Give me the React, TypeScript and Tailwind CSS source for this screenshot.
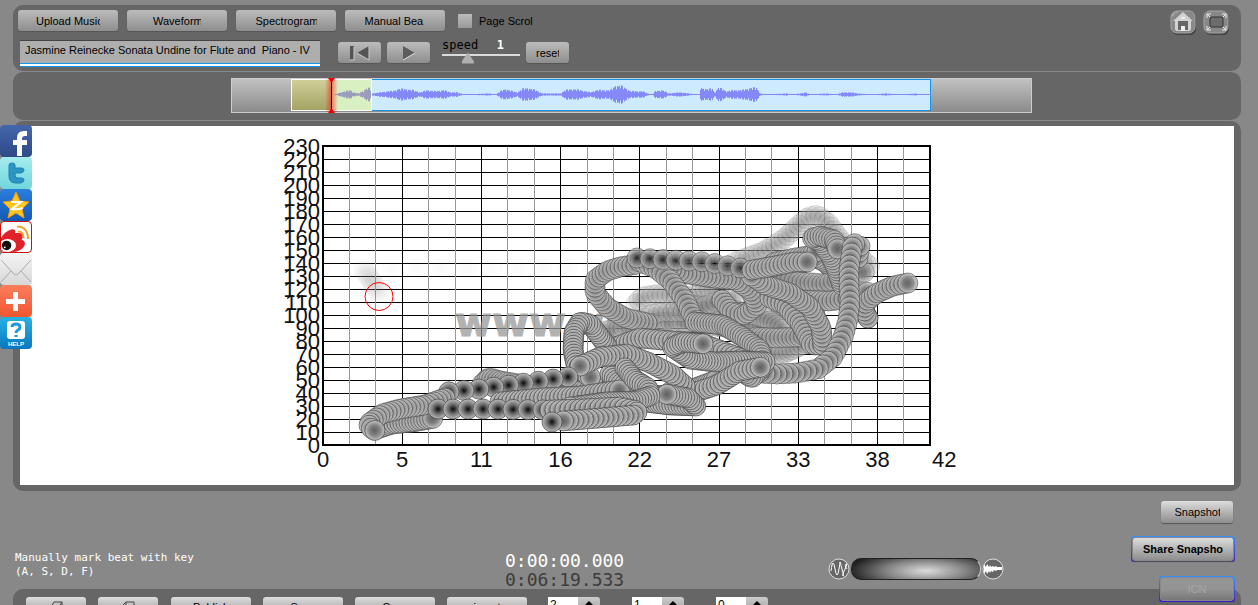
import React from "react";

type Point = [number, number];

type Strand = {
  points: Point[];
  step: number;
  opacity: number;
};

// oldest strand first, newest last
const strands: Strand[] = [
  { points: [[364, 270], [369, 277], [375, 286], [379, 293]], step: 3, opacity: 0.05 },
  { points: [[392, 270], [425, 268], [520, 268], [620, 268]], step: 25, opacity: 0.02 },
  { points: [[735, 262], [765, 251], [785, 238], [798, 226], [808, 217], [818, 215], [828, 223], [843, 243], [860, 258], [872, 268]], step: 5, opacity: 0.25 },
  { points: [[636, 304], [642, 297], [660, 294], [690, 297], [708, 288], [722, 296]], step: 5, opacity: 0.25 },
  { points: [[600, 332], [630, 326], [665, 322], [700, 325], [740, 328], [775, 320]], step: 4, opacity: 0.3 },
  { points: [[680, 305], [705, 306], [735, 310], [765, 318], [785, 330]], step: 4, opacity: 0.35 },
  { points: [[765, 355], [785, 353], [800, 346], [815, 340]], step: 4, opacity: 0.35 },
  { points: [[640, 320], [660, 312], [690, 312], [720, 300], [740, 296]], step: 5, opacity: 0.3 },
  { points: [[756, 337], [775, 338], [800, 337], [815, 330]], step: 4, opacity: 0.7 },
  { points: [[868, 318], [860, 305], [848, 290], [835, 272], [825, 262], [812, 256], [800, 265], [785, 270]], step: 3, opacity: 0.8 },
  { points: [[775, 276], [800, 282], [825, 284], [850, 275], [865, 272]], step: 4, opacity: 0.6 },
  { points: [[770, 290], [800, 300], [830, 301], [850, 298], [868, 292]], step: 4, opacity: 0.8 },
  { points: [[762, 272], [775, 262], [795, 258], [808, 256], [820, 250]], step: 4, opacity: 0.8 },
  { points: [[868, 318], [864, 310], [866, 302], [877, 293], [893, 286], [908, 283]], step: 4, opacity: 0.85 },
  { points: [[722, 300], [732, 312], [745, 315], [757, 305], [750, 290], [735, 280], [712, 278], [682, 273], [660, 265]], step: 4, opacity: 0.85 },
  { points: [[770, 298], [785, 305], [800, 323], [812, 345], [823, 345], [821, 327], [810, 307], [790, 293], [765, 285], [750, 275]], step: 4, opacity: 0.9 },
  { points: [[647, 323], [625, 318], [607, 307], [595, 293], [595, 280], [607, 271], [620, 267], [638, 264]], step: 4, opacity: 0.8 },
  { points: [[640, 262], [655, 268], [670, 280], [685, 300], [693, 317], [700, 322]], step: 5, opacity: 0.8 },
  { points: [[842, 285], [836, 268], [830, 255], [820, 242], [812, 238], [820, 236], [834, 240], [838, 250]], step: 3, opacity: 0.9 },
  { points: [[637, 258], [706, 262], [752, 270]], step: 13, opacity: 0.8 },
  { points: [[752, 270], [775, 266], [795, 262], [808, 262]], step: 4, opacity: 0.9 },
  { points: [[858, 258], [860, 246], [853, 243], [851, 255], [849, 270], [849, 287], [850, 303], [848, 320], [843, 337], [833, 357], [818, 369], [797, 373], [777, 374], [757, 373]], step: 6, opacity: 0.9 },
  { points: [[695, 322], [723, 325], [743, 337], [760, 350], [764, 366], [752, 378], [742, 372]], step: 3, opacity: 0.9 },
  { points: [[607, 350], [640, 338], [673, 341], [700, 343], [717, 349], [740, 358], [760, 366]], step: 4, opacity: 1 },
  { points: [[487, 379], [500, 384], [530, 392], [560, 393], [590, 390], [620, 382]], step: 4, opacity: 0.8 },
  { points: [[607, 346], [598, 334], [590, 324], [580, 322], [574, 332], [573, 350], [576, 365], [588, 376], [592, 378]], step: 3, opacity: 1 },
  { points: [[610, 374], [618, 382], [640, 392], [660, 396], [690, 390], [717, 380]], step: 3, opacity: 1 },
  { points: [[765, 362], [740, 361], [715, 362], [690, 359], [672, 347], [684, 342], [706, 344]], step: 3, opacity: 1 },
  { points: [[670, 392], [693, 393], [717, 385], [740, 371], [762, 367]], step: 4, opacity: 1 },
  { points: [[685, 386], [673, 375], [650, 363], [627, 354], [600, 357], [578, 367]], step: 4, opacity: 1 },
  { points: [[645, 402], [670, 405], [696, 406], [688, 398], [665, 394]], step: 3, opacity: 1 },
  { points: [[374, 430], [392, 424], [412, 422], [435, 418]], step: 3, opacity: 0.9 },
  { points: [[482, 384], [490, 378], [500, 381], [530, 386], [565, 384]], step: 3, opacity: 0.7 },
  { points: [[568, 377], [540, 381], [510, 385], [480, 389], [447, 392]], step: 15, opacity: 1 },
  { points: [[445, 398], [425, 405], [400, 409], [382, 414], [368, 424], [372, 429], [376, 431]], step: 4, opacity: 0.9 },
  { points: [[500, 402], [540, 398], [580, 396], [620, 390]], step: 4, opacity: 1 },
  { points: [[625, 368], [635, 380], [648, 388], [650, 396], [635, 401], [605, 402], [570, 407]], step: 3, opacity: 1 },
  { points: [[438, 409], [490, 409], [550, 410]], step: 15, opacity: 1 },
  { points: [[550, 410], [580, 409], [620, 407], [638, 411], [634, 415], [600, 418], [562, 421]], step: 5, opacity: 1 },
  { points: [[552, 422]], step: 20, opacity: 1 },
];

// walk along the poly line and drop a dot every step pixels
function dots({ points, step }: Strand): Point[] {
  const out: Point[] = [points[0]];
  let left = step;
  for (let i = 1; i < points.length; i++) {
    const [x1, y1] = points[i - 1];
    const [x2, y2] = points[i];
    const length = Math.hypot(x2 - x1, y2 - y1);
    let at = left;
    while (at <= length) {
      out.push([x1 + ((x2 - x1) * at) / length, y1 + ((y2 - y1) * at) / length]);
      at += step;
    }
    left = at - length;
  }
  return out;
}

const xLabels = ["0", "5", "11", "16", "22", "27", "33", "38"];

const Chart = () => {
  return (
    <svg
      viewBox="277 126 700 359"
      width={700}
      height={359}
      className="font-['Liberation_Sans',sans-serif] text-[22px]"
    >
      <defs>
        <radialGradient id="dot">
          <stop offset="0" stopColor="#080808" />
          <stop offset="0.45" stopColor="#686868" />
          <stop offset="1" stopColor="#bdbdbd" />
        </radialGradient>
        <radialGradient id="dense">
          <stop offset="0" stopColor="#606060" />
          <stop offset="0.5" stopColor="#808080" />
          <stop offset="1" stopColor="#c8c8c8" />
        </radialGradient>
      </defs>
      {Array.from({ length: 24 }, (_, i) => (
        <g key={i}>
          <line x1={323} x2={930} y1={445.5 - i * 13} y2={445.5 - i * 13} stroke="#000" />
          <text x={320} y={453 - i * 13} textAnchor="end" fill="#111">
            {i * 10}
          </text>
        </g>
      ))}
      {Array.from({ length: 23 }, (_, i) => {
        const x = Math.floor(323 + i * 26.4) + 0.5;
        return (
          <line key={i} x1={x} x2={x} y1={146} y2={445} stroke={i % 3 ? "#999" : "#000"} />
        );
      })}
      <rect x={323} y={146} width={607} height={299} fill="none" stroke="#000" strokeWidth={2} />
      {xLabels.map((label, i) => (
        <text key={label} x={323 + i * 79.2} y={467} textAnchor="middle" fill="#111">
          {label}
        </text>
      ))}
      <text x={932} y={467} fill="#111">
        42
      </text>
      <text
        x={455}
        y={336}
        fill="#999"
        stroke="#999"
        opacity={0.75}
        className="font-['DejaVu_Sans',sans-serif] text-[40px] font-bold"
      >
        www.vmus.net
      </text>
      {strands.map((strand, i) => (
        <g key={i}>
          {dots(strand).map(([x, y], j) => (
            <circle
              key={j}
              cx={x}
              cy={y}
              r={10}
              fill={strand.step > 10 ? "url(#dot)" : "url(#dense)"}
              stroke="#444"
              strokeWidth={0.7}
              opacity={strand.opacity}
            />
          ))}
        </g>
      ))}
      <circle cx={379} cy={296.5} r={14} fill="none" stroke="#f00" />
    </svg>
  );
};

// x and half height of the wave's outline
const envelope: Point[] = [
  [335, 0], [340, 2], [345, 3], [350, 4], [353, 2], [358, 1], [362, 3], [367, 6], [371, 5], [372, 1],
  [380, 2], [388, 3], [392, 3], [398, 5], [405, 5], [412, 4], [420, 2], [427, 4], [435, 3], [443, 4],
  [450, 2], [456, 2], [460, 1], [465, 0], [488, 1], [495, 0], [500, 3], [505, 5], [512, 3], [517, 2],
  [522, 5], [527, 6], [535, 4], [542, 1], [560, 1], [565, 4], [572, 5], [580, 4], [590, 2], [596, 4],
  [610, 4], [615, 8], [620, 8], [625, 6], [630, 3], [642, 3], [647, 1], [652, 0], [655, 3], [662, 4],
  [668, 1], [680, 2], [688, 1], [695, 0], [699, 0], [700, 6], [706, 5], [712, 5], [714, 2], [718, 6],
  [722, 5], [726, 3], [735, 4], [742, 4], [750, 6], [756, 6], [760, 1], [765, 0], [786, 1], [792, 0],
  [800, 1], [805, 2], [810, 0], [826, 1], [835, 0], [843, 2], [850, 2], [858, 1], [870, 0], [885, 1],
  [900, 0], [915, 1], [920, 0], [931, 0],
];

function wavePath(from: number, to: number) {
  let d = "";
  for (let i = 1; i < envelope.length; i++) {
    const [x1, a1] = envelope[i - 1];
    const [x2, a2] = envelope[i];
    for (let x = Math.max(x1, from); x < Math.min(x2, to); x++) {
      const amp = a1 + ((a2 - a1) * (x - x1)) / (x2 - x1);
      const half = Math.max(0.5, amp * (0.65 + ((x * x * 7) % 11) / 18));
      d += `M${x + 0.5} ${94.5 - half}V${94.5 + half}`;
    }
  }
  return d;
}

const Overview = () => {
  return (
    <svg viewBox="231 78 801 35" width={801} height={35}>
      <defs>
        <linearGradient id="strip" x2="0" y2="1">
          <stop offset="0" stopColor="#c2c2c2" />
          <stop offset="1" stopColor="#8a8a8a" />
        </linearGradient>
        <linearGradient id="olive" x2="0" y2="1">
          <stop offset="0" stopColor="#d0d09a" />
          <stop offset="1" stopColor="#a3a364" />
        </linearGradient>
        <linearGradient id="glow">
          <stop offset="0" stopColor="#f00" stopOpacity="0" />
          <stop offset="0.5" stopColor="#f00" stopOpacity="0.5" />
          <stop offset="1" stopColor="#f00" stopOpacity="0" />
        </linearGradient>
      </defs>
      <rect x={231.5} y={78.5} width={800} height={34} fill="url(#strip)" stroke="#ccc" />
      <rect x={331.5} y={79.5} width={599} height={31} fill="#cdeafe" stroke="#1794ee" />
      <rect x={291.5} y={79.5} width={40} height={31} fill="url(#olive)" />
      <rect x={331.5} y={79.5} width={40} height={31} fill="#d9f0c2" />
      <path d={wavePath(335, 371)} stroke="#9a9ebc" />
      <path d={wavePath(371, 931)} stroke="#8488f8" />
      <rect x={291.5} y={79.5} width={80} height={31} fill="none" stroke="#fff" />
      <rect x={325} y={79} width={13} height={33} fill="url(#glow)" />
      <line x1={331.5} x2={331.5} y1={79} y2={112} stroke="#600" />
      <path d="M328 78h7l-3 4h-1zM328 113h7l-3-4h-1z" fill="#e00" />
    </svg>
  );
};

const button =
  "flex items-center justify-center rounded-[3px] bg-linear-to-b from-[#bcbcbc] to-[#8e8e8e] text-[11px] text-black shadow-[0_1px_1px_#555]";
const clipped = "block h-3 overflow-hidden whitespace-nowrap text-left leading-3";

const tabs = [
  { label: "Upload Music", look: "w-16" },
  { label: "Waveform", look: "w-12" },
  { label: "Spectrogram", look: "w-[61px]" },
  { label: "Manual Bea", look: "w-[61px]" },
];

const Toolbar = () => {
  return (
    <header className="rounded-[10px] bg-[#666] pt-[5px] pr-3 pb-1 pl-[5px]">
      <div className="flex h-[30px] items-start">
        <div className="flex items-center gap-[9px]">
          {tabs.map((tab, i) => (
            <button
              key={tab.label}
              className={`${button} h-[21px] w-[100px] ${i % 2 ? "from-[#9c9c9c]" : ""}`}
            >
              <span className={`${clipped} ${tab.look}`}>{tab.label}</span>
            </button>
          ))}
        </div>
        <div className="ml-[13px] flex h-[21px] items-center gap-[7px]">
          <input
            id="scroll"
            type="checkbox"
            className="size-[14px] appearance-none bg-linear-to-b from-[#bbb] to-[#999]"
          />
          <label htmlFor="scroll" className={`${clipped} text-[11px]`}>
            Page Scrol
          </label>
        </div>
        <div className="ml-auto flex gap-[6px]">
          <button aria-label="Home">
            <svg width={27} height={25} viewBox="0 0 27 25">
              <rect x={3} y={2} width={24} height={23} rx={6} fill="#3e4440" />
              <rect x={2} y={1} width={24} height={22} rx={6} fill="#888" stroke="#a5a5a5" />
              <path d="M3 7Q4 2 10 2L6 3z" fill="#ddd" />
              <path d="M14 2L4 11h2v8q0 2 2 2h12q2 0 2-2v-8h2z" fill="#d2d2d2" />
              <path d="M9 11h10v9h-3v-4h-4v4H9z" fill="#666" />
              <path d="M12 16h4v5h-4zM12 7h4v2h-4z" fill="#eee" />
            </svg>
          </button>
          <button aria-label="Full screen">
            <svg width={27} height={25} viewBox="0 0 27 25">
              <rect x={3} y={2} width={24} height={23} rx={6} fill="#3e4440" />
              <rect x={2} y={1} width={24} height={22} rx={6} fill="#888" stroke="#a5a5a5" />
              <rect x={8} y={7} width={13} height={10} rx={2} fill="#6c6c6c" stroke="#333" />
              <path
                d="M5 8V4h4M5 4l3 3M20 4h4v4M24 4l-3 3M5 16v4h4M5 20l3-3M24 16v4h-4M24 20l-3-3"
                stroke="#eee"
                fill="none"
              />
            </svg>
          </button>
        </div>
      </div>

      <div className="flex items-start pl-[2px]">
        <div className="w-[300px]">
          <input
            aria-label="Title"
            defaultValue="Jasmine Reinecke Sonata Undine for Flute and  Piano - IV"
            className="block h-[23px] w-full border-t border-[#444] bg-[#aeaeae] px-[5px] pb-1 text-[11px] text-black outline-none"
          />
          <div className="h-1 border-y border-[#1794ee] bg-white" />
        </div>
        <button className={`${button} mt-[2px] ml-[18px] h-[21px] w-[43px]`} aria-label="Rewind">
          <svg width={22} height={16} viewBox="0 0 22 16">
            <path d="M1 15V1h4v14zM20 1v14L8 8z" fill="#555" />
            <path d="M5 2v13H1M20 1v14L8 8" stroke="#ccc" fill="none" />
          </svg>
        </button>
        <button className={`${button} mt-[2px] ml-[6px] h-[21px] w-[43px]`} aria-label="Play">
          <svg width={16} height={16} viewBox="0 0 16 16">
            <path d="M2 1v14l12-7z" fill="#5c5c5c" />
            <path d="M2 15l12-7" stroke="#ddd" />
          </svg>
        </button>
        <div className="ml-3 w-[78px]">
          <div className="flex justify-between pr-4 font-['DejaVu_Sans_Mono',monospace] text-[12px] leading-[10px]">
            <label htmlFor="speed">speed</label>
            <output className="font-bold text-white">1</output>
          </div>
          <input
            id="speed"
            type="range"
            defaultValue={30}
            className="mt-1 block h-3 w-full appearance-none bg-[linear-gradient(#dadada,#dadada)] bg-[length:100%_2px] bg-no-repeat [&::-webkit-slider-thumb]:-mt-1 [&::-webkit-slider-thumb]:h-[11px] [&::-webkit-slider-thumb]:w-[12px] [&::-webkit-slider-thumb]:appearance-none [&::-webkit-slider-thumb]:bg-[#b0b0b0] [&::-webkit-slider-thumb]:[clip-path:polygon(50%_0,100%_80%,100%_100%,0_100%,0_80%)]"
          />
        </div>
        <button className={`${button} mt-[2px] ml-[6px] h-[21px] w-[43px]`}>
          <span className={`${clipped} w-[23px]`}>reset</span>
        </button>
      </div>
    </header>
  );
};

const shares = [
  {
    name: "Facebook",
    look: "bg-linear-to-b from-[#4467ad] to-[#2f4a86]",
    icon: <path d="M17 31V20h-4v-5h4v-2q0-7 7-7h3v5h-2q-3 0-3 3v1h5v5h-5v11z" fill="#fff" />,
  },
  {
    name: "Twitter",
    look: "bg-linear-to-b from-[#a5ecee] to-[#6fd6dc]",
    icon: (
      <path
        d="M9 8q0-2 3-2t3 2v3h6q3 0 3 2t-3 3h-6v2q0 3 3 3h3q3 0 3 2t-3 3h-5q-7 0-7-7z"
        fill="#2b95c6"
        stroke="#1f7fae"
      />
    ),
  },
  {
    name: "Qzone",
    look: "bg-linear-to-b from-[#2b7fdc] to-[#1259b4]",
    icon: (
      <>
        <path
          d="M16 3l4 9 9 1-7 7 2 9-8-5-8 5 2-9-7-7 9-1z"
          fill="#ffc61e"
          stroke="#f09a10"
        />
        <path d="M11 13h10l-9 7q5 1 11-1" stroke="#fff" strokeWidth={2} fill="none" />
      </>
    ),
  },
  {
    name: "Weibo",
    look: "border border-[#c11] bg-white",
    icon: (
      <>
        <path
          d="M0 17q4-7 11-9 5-1 4 4 8-2 8 4 0 2-1 3 5 2 3 6-3 7-14 7Q2 32 0 30z"
          fill="#e0202a"
        />
        <ellipse cx={7} cy={25} rx={9} ry={7} fill="#fff" />
        <circle cx={6} cy={25} r={5} fill="#111" />
        <circle cx={4} cy={27} r={1} fill="#fff" />
        <path d="M17 5q11-1 12 13M18 10q6 0 6 7" stroke="#f59a1d" strokeWidth={2} fill="none" />
      </>
    ),
  },
  {
    name: "Email",
    look: "bg-linear-to-b from-[#f4f4f4] to-[#d8d8d8]",
    icon: (
      <path
        d="M1 7l13 14q2 2 4 0L31 7M1 29l10-11M31 29L21 18"
        stroke="#aaa"
        fill="none"
      />
    ),
  },
  {
    name: "More",
    look: "bg-linear-to-b from-[#fb7d5c] to-[#f2552f]",
    icon: <path d="M13 7h5v7h7v5h-7v7h-5v-7H6v-5h7z" fill="#fff" />,
  },
  {
    name: "Help",
    look: "bg-linear-to-b from-[#28b3e4] to-[#0877bd]",
    icon: (
      <>
        <rect x={7} y={4} width={18} height={18} rx={3} fill="#fff" />
        <path
          d="M12 10q0-3 4-3t4 3q0 2-2 3t-2 3M16 18v2"
          stroke="#1d9bd4"
          strokeWidth={3}
          fill="none"
        />
        <text
          x={16}
          y={29}
          textAnchor="middle"
          fill="#fff"
          className="font-['Liberation_Sans',sans-serif] text-[6px] font-bold"
        >
          HELP
        </text>
      </>
    ),
  },
];

const ShareBar = () => {
  return (
    <nav className="absolute top-[125px] left-0">
      {shares.map((share) => (
        <a
          key={share.name}
          href="#"
          aria-label={share.name}
          className={`block size-8 overflow-hidden rounded-[4px] ${share.look}`}
        >
          <svg viewBox="0 0 32 32" className="size-full">
            {share.icon}
          </svg>
        </a>
      ))}
    </nav>
  );
};

const frame = "rounded-[3px] bg-linear-to-b from-[#3a90ff] to-[#3a10c8] p-px";

const Status = () => {
  return (
    <section className="relative grid min-h-[98px] grid-cols-[490fr_323fr_303fr_104fr] pr-[23px] pl-[15px] font-['DejaVu_Sans_Mono',monospace]">
      <p className="pt-[60px] text-[11px] leading-[14px] text-white">
        Manually mark beat with key
        <br />
        (A, S, D, F)
      </p>
      <div className="pt-[60px] text-[18px] leading-[19px]">
        <p className="text-white">0:00:00.000</p>
        <p className="text-[#3c3c3c]">0:06:19.533</p>
      </div>
      <div className="flex items-start gap-[1px] pt-[67px]">
        <svg width={22} height={22} viewBox="0 0 22 22">
          <circle cx={11} cy={11} r={10} fill="#666" stroke="#ddd" />
          <path
            d="M3 13q1-8 2-8t2 6 2 6 2-6 1-7 2 7 1 7 2-7 1-5 1 5"
            stroke="#fff"
            fill="none"
          />
        </svg>
        <input
          type="range"
          aria-label="Zoom"
          className="h-[22px] w-[130px] appearance-none rounded-[10px] border border-[#222] border-r-[#ccc] bg-[radial-gradient(ellipse_60%_100%_at_58%_60%,#ddd,#888_50%,#222)] [&::-webkit-slider-thumb]:appearance-none"
        />
        <svg width={22} height={22} viewBox="0 0 22 22">
          <circle cx={11} cy={11} r={10} fill="#666" stroke="#ddd" />
          <path
            d="M2 6l2 3 1-3 2 3 1-2 1 2 2-1 1 1 2-1 1 1h5v3h-5l-1 1-2-1-1 2-2-1-1 2-1-2-2 3-1-3-2 3z"
            fill="#fff"
          />
        </svg>
      </div>
      <div className="flex flex-col items-end gap-[13px] pt-[10px] font-['Liberation_Sans',sans-serif]">
        <button className={`${button} mr-[2px] h-[22px] w-[72px] from-[#ddd]`}>
          <span className={`${clipped} w-[45px]`}>Snapshot</span>
        </button>
        <div className={`${frame} w-full`}>
          <button className={`${button} h-6 w-full border border-[#888] from-[#ddd] font-bold`}>
            <span className={`${clipped} w-[80px]`}>Share Snapshot</span>
          </button>
        </div>
      </div>
      <div className={`${frame} absolute top-[85px] right-[23px] w-[76px]`}>
        <button
          disabled
          className="flex h-6 w-full items-center justify-center rounded-[3px] border border-[#888] bg-linear-to-b from-[#949494] from-50% to-[#777] font-['Liberation_Sans',sans-serif] text-[11px] text-[#a5a5a5]"
        >
          ICN
        </button>
      </div>
    </section>
  );
};

const Spinner = ({ name, value }: { name: string; value: string }) => {
  return (
    <div className="flex">
      <input
        aria-label={name}
        defaultValue={value}
        className="h-[21px] w-[30px] bg-white px-[2px] pb-[6px] text-[12px] text-black outline-none"
      />
      <button
        aria-label={`${name} up`}
        className="flex h-[21px] w-[22px] justify-center rounded-r-[3px] bg-linear-to-b from-[#ccc] to-[#8e8e8e] pt-1"
      >
        <svg width={10} height={6} viewBox="0 0 10 6">
          <path d="M5 0l5 5v1H0V5z" fill="#000" />
        </svg>
      </button>
    </div>
  );
};

const actions = ["Publish", "Save", "Copy", "insert"];

const Footer = () => {
  return (
    <footer className="flex gap-[13px] rounded-t-[10px] bg-[#666] px-[13px] py-2">
      <div className="flex gap-3">
        <button className={`${button} h-[21px] w-[60px] from-[#ddd]`} aria-label="Erase">
          <svg width={16} height={16} viewBox="0 0 16 16">
            <path d="M1 10L6 2h8l-5 8zM1 10v4h8v-4M9 14l5-8V2" stroke="#444" fill="none" />
          </svg>
        </button>
        <button className={`${button} h-[21px] w-[60px] from-[#ddd]`} aria-label="New">
          <svg width={16} height={16} viewBox="0 0 16 16">
            <path d="M1 7l5-5h8v12H1zM6 2v5H1" stroke="#444" fill="none" />
          </svg>
        </button>
      </div>
      <div className="flex gap-3">
        {actions.map((action) => (
          <button key={action} className={`${button} h-[21px] w-20 from-[#ddd]`}>
            {action}
          </button>
        ))}
      </div>
      <div className="flex gap-8 pl-2">
        <Spinner name="Beats" value="2" />
        <Spinner name="Step" value="1" />
        <Spinner name="Offset" value="0" />
      </div>
    </footer>
  );
};

const App = () => {
  return (
    <div className="relative h-screen overflow-hidden bg-[#888] font-['Liberation_Sans',sans-serif]">
      <main className="flex flex-col gap-px pt-[5px] pr-[17px] pl-[13px]">
        <Toolbar />
        <div className="flex justify-center rounded-[10px] bg-[#666] pt-[6px] pb-[7px] pl-[9px]">
          <Overview />
        </div>
        <div className="rounded-[10px] bg-[#666] px-[7px] pt-[5px] pb-[6px]">
          <div className="flex justify-center bg-white">
            <Chart />
          </div>
        </div>
      </main>
      <Status />
      <div className="pr-[17px] pl-[13px]">
        <Footer />
      </div>
      <ShareBar />
    </div>
  );
};

export default App;
